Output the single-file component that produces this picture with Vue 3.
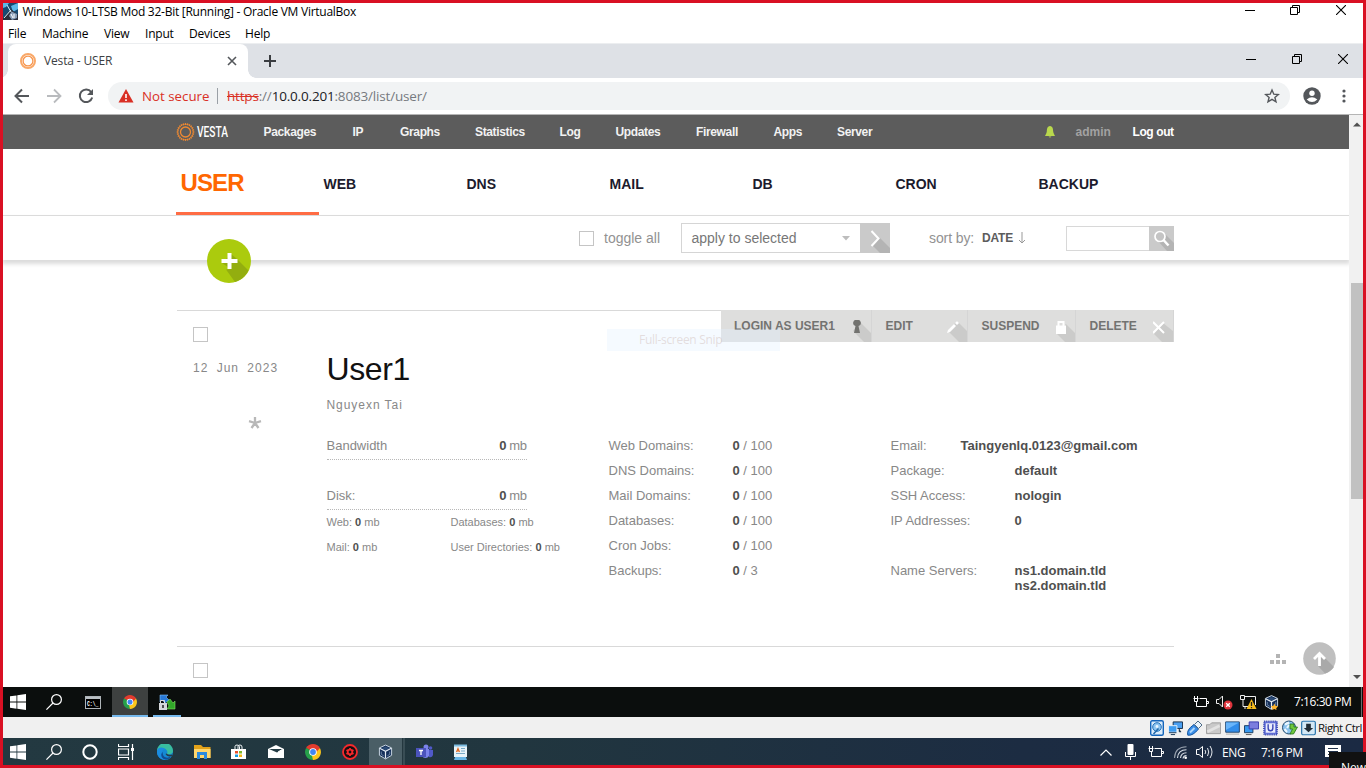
<script setup>
const menus = ['File', 'Machine', 'View', 'Input', 'Devices', 'Help']
const topLinks = ['Packages', 'IP', 'Graphs', 'Statistics', 'Log', 'Updates', 'Firewall', 'Apps', 'Server']
const sections = ['USER', 'WEB', 'DNS', 'MAIL', 'DB', 'CRON', 'BACKUP']
const quotas = [
  ['Web Domains:', '100'],
  ['DNS Domains:', '100'],
  ['Mail Domains:', '100'],
  ['Databases:', '100'],
  ['Cron Jobs:', '100'],
  ['Backups:', '3'],
]
const account = [
  ['Package:', 'default'],
  ['SSH Access:', 'nologin'],
  ['IP Addresses:', '0'],
]
const rays = Array.from({ length: 24 }, (_, i) => i * 15)
</script>

<template>
  <div class="screen">
    <svg class="defs" width="0" height="0">
      <defs>
        <symbol id="win" viewBox="0 0 16 16"><path fill="#fff" d="M0 2.3 6.5 1.4V7.6H0ZM7.3 1.3 16 0V7.6H7.3ZM0 8.5H6.5V14.7L0 13.8ZM7.3 8.5H16V16L7.3 14.8Z" /></symbol>
        <symbol id="search" viewBox="0 0 16 16"><g fill="none" stroke="#fff" stroke-width="1.2"><circle cx="10.5" cy="5.5" r="4.9" /><path d="M7 9 .4 15.600" /></g></symbol>
        <symbol id="chrome" viewBox="0 0 16 16">
          <path fill="#e33b2e" d="M8 8 1.1 4A8 8 0 0 1 14.9 4Z" /><path fill="#fbc61b" d="M8 8 14.9 4A8 8 0 0 1 8 16Z" /><path fill="#26a04a" d="M8 8V16A8 8 0 0 1 1.1 4Z" />
          <path fill="#e33b2e" d="M8 4H14.9L11.5 8Z" /><path fill="#fbc61b" d="M11.5 6 8 16 7 12Z" /><path fill="#26a04a" d="M1.1 4 4.5 10 8 8Z" />
          <circle cx="8" cy="8" r="3.8" fill="#fff" /><circle cx="8" cy="8" r="2.9" fill="#4086f4" />
        </symbol>
        <symbol id="restore" viewBox="0 0 10 10"><g fill="none" stroke="#000"><path d="M.5 2.5H7.5V9.5H.5ZM2.5 2.5V.5H9.5V7.5H7.5" /></g></symbol>
        <symbol id="close" viewBox="0 0 10 10"><path d="M0 0 10 10M10 0 0 10" stroke="#000" fill="none" stroke-width="1.1" /></symbol>
        <symbol id="battery" viewBox="0 0 16 12"><g fill="none" stroke="#fff"><path d="M6.500 2.500H13.500V10.500H3.500V7M14 5.500H15.500V7.500H14" /><path d="M1.500 0V2M4.500 0V2M.5 2.500H5.500M1.500 3V5.500H4.500V3M3.500 6V8" /></g></symbol>
        <symbol id="vbox" viewBox="0 0 16 16"><path d="M8 .6 14.500 3.600V11.500L8 15.400 1.500 11.500V3.600Z" fill="#16305a" stroke="#cfdbe6" stroke-width="1" /><path d="M4 4 8 2.200 12 4 8 6Z" fill="#2c4c77" /><path d="M1.800 4 8 7.300 14.200 4M8 7.300V15" fill="none" stroke="#e3ebf2" stroke-width="1.300" /><path d="M3.500 7.500V10.500L6 12M12.500 7.500V10.500L10 12" fill="none" stroke="#6d86a5" stroke-width="1" /></symbol>
        <symbol id="ring" viewBox="0 0 18 18">
          <g fill="none" stroke="#f9a868"><circle cx="9" cy="9" r="4.900" stroke-width="1.300" stroke="#f7934a" /><circle cx="9" cy="9" r="7" stroke-width="2" /></g>
        </symbol>
      </defs>
    </svg>

    <header class="vm-title">
      <svg class="vm-icon" width="15" height="17" viewBox="0 0 15 17"><rect width="15" height="17" fill="#174a72" /><path d="M0 0H6L3 4 0 5ZM8 3 15 0V6L10 9Z" fill="#5bb8e8" /><path d="M0 15 8 6 15 12V17H0Z" fill="#2b2f3c" /><path d="M1 15 8 7M4 2 8 9" stroke="#d6edf8" /><path d="M8.500 8.500 14 11V15L9 17 6 13Z" fill="#8ba0ba" /><path d="M8 11 10 15M11 11V15" stroke="#fff" /></svg>
      <span class="vm-name">Windows 10-LTSB Mod 32-Bit [Running] - Oracle VM VirtualBox</span>
      <div class="win-buttons vm-buttons">
        <svg width="10" height="10"><path d="M0 5.500H10" stroke="#000" /></svg>
        <svg width="10" height="10"><use href="#restore" /></svg>
        <svg width="10" height="10"><use href="#close" /></svg>
      </div>
    </header>
    <nav class="vm-menu"><span v-for="m in menus" :key="m">{{ m }}</span></nav>

    <div class="tab-strip">
      <div class="tab">
        <svg width="18" height="18" class="favicon"><use href="#ring" /></svg>
        <span class="tab-title">Vesta - USER</span>
        <svg width="10" height="10" viewBox="0 0 10 10"><path d="M1 1 9 9M9 1 1 9" stroke="#54575b" stroke-width="1.600" /></svg>
      </div>
      <svg class="new-tab" width="12" height="12"><path d="M6 0V12M0 6H12" stroke="#3a3d41" stroke-width="2" /></svg>
      <div class="win-buttons chrome-buttons">
        <svg width="10" height="10"><path d="M0 5.500H10" stroke="#000" /></svg>
        <svg width="10" height="10"><use href="#restore" /></svg>
        <svg width="10" height="10"><use href="#close" /></svg>
      </div>
    </div>
    <div class="address-row">
      <svg class="nav-icon" width="16" height="16" viewBox="0 0 16 16"><path d="M15 8H2M8 1.500 1.500 8 8 14.500" fill="none" stroke="#54575b" stroke-width="2" /></svg>
      <svg class="nav-icon" width="16" height="16" viewBox="0 0 16 16"><path d="M1 8H14M8 1.500 14.500 8 8 14.500" fill="none" stroke="#b9bbbe" stroke-width="1.800" /></svg>
      <svg class="nav-icon" width="16" height="16" viewBox="0 0 16 16"><path d="M13.200 4A6.300 6.300 0 1 0 14.200 9.500" fill="none" stroke="#54575b" stroke-width="2" /><path d="M15 1V7H9Z" fill="#54575b" /></svg>
      <div class="omnibox">
        <svg width="16" height="14" viewBox="0 0 16 14"><path d="M8 0 15.500 13.500H.5Z" fill="#d93025" /><path d="M8 5V9M8 10.200V12" stroke="#fff" stroke-width="1.600" /></svg>
        <span class="insecure">Not secure</span>
        <i class="bar"></i>
        <span class="url"><s>https</s>://<b>10.0.0.201</b>:8083/list/user/</span>
        <svg class="star" width="16" height="16" viewBox="0 0 16 16"><path d="M8 2 9.800 6.200 14.300 6.500 10.900 9.400 12 13.800 8 11.400 4 13.800 5.100 9.400 1.700 6.500 6.200 6.200Z" fill="none" stroke="#54575b" stroke-width="1.400" /></svg>
      </div>
      <svg class="avatar" width="18" height="18" viewBox="0 0 18 18"><circle cx="9" cy="9" r="8.700" fill="#54575b" /><circle cx="9" cy="6.300" r="2.700" fill="#fff" /><path d="M3.700 12.500Q9 8 14.300 12.500 9 17.500 3.700 12.500Z" fill="#fff" /></svg>
      <svg class="dots" width="4" height="14"><g fill="#54575b"><circle cx="2" cy="2" r="1.600" /><circle cx="2" cy="7" r="1.600" /><circle cx="2" cy="12" r="1.600" /></g></svg>
    </div>

    <div class="viewport">
      <div class="page">
        <div class="topbar">
          <svg class="logo" width="56" height="22">
            <g fill="none" stroke="#f08a32" transform="translate(9.500 11)"><circle r="5" stroke-width="1.300" /><circle r="7.900" stroke-width=".7" /><path v-for="a in rays" :key="a" d="M7 0H8.900" stroke-width="1.100" :transform="`rotate(${a})`" /></g>
            <text x="21" y="16" textLength="31" lengthAdjust="spacingAndGlyphs" class="logo-text">VESTA</text>
          </svg>
          <div class="top-links"><span v-for="l in topLinks" :key="l">{{ l }}</span></div>
          <svg class="bell" width="10" height="12" viewBox="0 0 10 12"><path d="M5 0C8 .5 8 3 8.200 5.500 8.400 7.500 9.500 8.500 10 10H0C.5 8.500 1.600 7.500 1.800 5.500 2 3 2 .5 5 0ZM3.500 10.500H6.500L5 11.800Z" fill="#b9d84d" /></svg>
          <span class="admin">admin</span>
          <span class="logout">Log out</span>
        </div>

        <nav class="sections"><div v-for="(s, i) in sections" :key="s" :class="['section', { active: i === 0 }]">{{ s }}</div></nav>

        <div class="toolbar">
          <i class="box"></i>
          <span class="toggle">toggle all</span>
          <div class="select"><span>apply to selected</span><svg width="8" height="5"><path d="M0 0H8L4 4.500Z" fill="#bdbdbd" /></svg></div>
          <svg width="30" height="30"><rect width="30" height="30" fill="#cacaca" /><path d="M13 23 20 15 30 25V30H20Z" fill="#b4b4b4" /><path d="M11.500 8 18.500 15.500 11.500 23" fill="none" stroke="#fff" stroke-width="2" /></svg>
          <span class="sort">sort by:</span><span class="date-sort">DATE</span>
          <svg class="down" width="8" height="12"><path d="M4 0V11M1 8 4 11 7 8" fill="none" stroke="#999" /></svg>
          <div class="search-box"></div>
          <svg width="25" height="25"><rect width="25" height="25" fill="#cacaca" /><path d="M8 14 15 7 25 17V25H18Z" fill="#b4b4b4" /><circle cx="11" cy="10.500" r="5" fill="#c4c4c4" stroke="#fff" stroke-width="1.700" /><path d="M14.500 14 19.500 19.500" stroke="#fff" stroke-width="2.500" /></svg>
        </div>

        <svg class="fab" width="44" height="44"><circle cx="22" cy="22" r="22" fill="#abcb0d" /><path d="M15 24 24 15 30 20 41.500 31.500A22 22 0 0 1 28 43L19 30.500 24 30Z" fill="#93ae0f" /><path d="M22.500 14V30M14.500 22H30.500" stroke="#fff" stroke-width="4" /></svg>

        <section class="card">
          <div class="meta">
            <i class="box"></i>
            <div class="date">12 Jun 2023</div>
            <svg class="fav" width="14" height="14"><path d="M7 7V1M7 7 1 5.200M7 7 13 5.200M7 7 3.500 12M7 7 10.500 12" stroke="#b8b8b8" stroke-width="2.300" /></svg>
          </div>
          <div class="body">
            <div class="card-head">
              <div class="who"><h1>User1</h1><p>Nguyexn Tai</p></div>
              <div class="actions">
                <div>LOGIN AS USER1<svg width="20" height="22" viewBox="0 0 20 22"><path d="M2 11 9 2 20 13V22H13L3 12Z" class="shade" /><path d="M6 0A3 3 0 0 1 7.500 6L9 13H3L4.500 6A3 3 0 0 1 6 0Z" fill="#72726f" /></svg></div>
                <div>EDIT<svg width="20" height="22" viewBox="0 0 20 22"><path d="M1 11 10 1 20 11V22H12Z" class="shade" /><path d="M0 13 1 10 7 4 9 6 3 12ZM8 3 10 1 12 3 10 5Z" fill="#fff" /></svg></div>
                <div>SUSPEND<svg width="20" height="22" viewBox="0 0 20 22"><path d="M1 13 11 4 20 13V22H10Z" class="shade" /><path d="M1 5.500H11V14H1Z" fill="#fff" /><path d="M3.500 7V2H8.500V7" fill="none" stroke="#fff" stroke-width="2" /></svg></div>
                <div>DELETE<svg width="20" height="22" viewBox="0 0 20 22"><path d="M1 14 10 3 20 11V22H9Z" class="shade" /><path d="M0 2 11 13M11 2 0 13" stroke="#fff" stroke-width="2" /></svg></div>
              </div>
            </div>
            <div class="stats">
              <div class="usage">
                <div class="meter"><span>Bandwidth</span><span class="amount"><b>0</b> mb</span></div>
                <div class="meter second"><span>Disk:</span><span class="amount"><b>0</b> mb</span></div>
                <div class="split"><span>Web: <b>0</b> mb</span><span>Databases: <b>0</b> mb</span><span>Mail: <b>0</b> mb</span><span>User Directories: <b>0</b> mb</span></div>
              </div>
              <div class="quota"><div v-for="q in quotas" :key="q[0]" class="pair"><span>{{ q[0] }}</span><span><b>0</b> / {{ q[1] }}</span></div></div>
              <div class="account">
                <div class="pair email"><span>Email:</span><b>Taingyenlq.0123@gmail.com</b></div>
                <div v-for="a in account" :key="a[0]" class="pair"><span>{{ a[0] }}</span><b>{{ a[1] }}</b></div>
                <div class="pair servers"><span>Name Servers:</span><b>ns1.domain.tld<br>ns2.domain.tld</b></div>
              </div>
            </div>
          </div>
        </section>
        <section class="card next"><div class="meta"><i class="box"></i></div></section>

        <div class="snip">Full-screen Snip</div>
        <svg class="sitemap" width="16" height="10"><path d="M6 0H10V4H6ZM0 6H4V10H0ZM6 6H10V10H6ZM12 6H16V10H12Z" fill="#b4b4b4" /></svg>
        <svg class="to-top" width="33" height="33"><circle cx="16.500" cy="16.500" r="16.300" fill="#bfbfbf" /><path d="M17 11 22 16 31 25A16 16 0 0 1 22 31.500L15 24Z" fill="#a9a9a9" /><path d="M16.500 24V12M11 17 16.500 11.500 22 17" fill="none" stroke="#fff" stroke-width="2.800" /></svg>
      </div>
      <div class="scrollbar">
        <svg width="8" height="5"><path d="M0 4.500 4 .5 8 4.500Z" fill="#505050" /></svg>
        <i class="thumb"></i>
        <svg width="8" height="5"><path d="M0 0H8L4 4Z" fill="#505050" /></svg>
      </div>
    </div>

    <div class="guest-bar">
      <div class="c30"><svg width="16" height="16"><use href="#win" /></svg></div>
      <div class="c42"><svg width="16" height="16"><use href="#search" /></svg></div>
      <div class="c36"><svg width="16" height="13"><rect x=".5" y=".5" width="15" height="12" fill="#000" stroke="#aeb4b8" /><path d="M1 2H15" stroke="#b9bfc3" stroke-width="2" /><text x="2" y="9.500" textLength="11.500" lengthAdjust="spacingAndGlyphs" class="cmd-text">C:\_</text></svg></div>
      <div class="c36 tile"><svg width="14" height="14"><use href="#chrome" /></svg></div>
      <div class="c28 under">
        <svg width="18" height="18" viewBox="0 0 18 18"><path d="M2 2H10L8 4 11 7 7 10 4 7 2 9Z" fill="#2879d8" stroke="#7cbcf5" stroke-width=".6" /><path d="M9 9 12 6 15 10 17 8V16H9L11 13Z" fill="#31a829" stroke="#83de63" stroke-width=".6" /><path d="M2.500 10V7.500H6.500V10" fill="none" stroke="#ddd" /><rect x="1" y="10" width="8" height="7" fill="#d5d7da" /><path d="M5 12V15" stroke="#222" stroke-width="1.500" /></svg>
      </div>
      <div class="tray guest-tray">
        <svg width="16" height="12"><use href="#battery" /></svg>
        <svg width="17" height="16" viewBox="0 0 17 16"><path d="M.5 5.500H3L6.500 2V13L3 9.500H.500Z" fill="none" stroke="#eee" /><circle cx="12" cy="11" r="4.500" fill="#df343c" /><path d="M10.200 9.200 13.800 12.800M13.800 9.200 10.200 12.800" stroke="#fff" stroke-width="1.300" /></svg>
        <svg width="17" height="16" viewBox="0 0 17 16"><path d="M5 2.500H15.500V11M3 6V12.500H9M5 12V15M.500 1.500H4.500V5.500H.500Z" fill="none" stroke="#eee" /><path d="M11.500 5 16.500 15H6.500Z" fill="#f7bd1b" /><path d="M11.500 8V12M11.500 13V14.200" stroke="#222" stroke-width="1.300" /></svg>
        <svg width="15" height="15" viewBox="0 0 16 16"><use href="#vbox" /><path d="M11 9 12.200 11.500 15 12 13 14 13.400 16 11 15 8.600 16 9 14 7.300 12 10 11.500Z" fill="#ffb52d" /></svg>
        <span class="clock">7:16:30 PM</span>
      </div>
    </div>

    <div class="status-bar">
      <svg width="14" height="16" viewBox="0 0 14 16" preserveAspectRatio="none"><rect x=".7" y=".7" width="12.600" height="14.600" rx="1.500" fill="#d9ebfb" stroke="#1465bb" stroke-width="1.400" /><circle cx="7" cy="7" r="4.300" fill="#8ec5f1" stroke="#2371b9" /><circle cx="7" cy="6.500" r="1.400" fill="#eef7fe" /><path d="M3.500 14 8.500 8.500" stroke="#2368a8" fill="none" stroke-width="1.600" /></svg>
      <svg width="15" height="16" viewBox="0 0 16 16"><path d="M5.500 1.500H15.500V8.500H5.500Z" fill="#499ff1" stroke="#142c47" /><path d="M.500 5.500H9.500V12.500H.500Z" fill="#3e9cf0" stroke="#e9f2fa" /><path d="M1 13H9M3 15H7.500M12 9V12H14" stroke="#123456" /></svg>
      <svg width="16" height="16" viewBox="0 0 16 16"><path d="M.800 15.200Q-1 10 7 4.500L11.500 9Q6 16 .800 15.200Z" fill="#3a8ee8" stroke="#1657a0" /><path d="M7.500 4.500 11 1 15 5 11.500 8.500Z" fill="#e9f3fb" stroke="#4d6a86" /><path d="M3 12.500 7.500 8" stroke="#abd6fb" stroke-width="2" /></svg>
      <svg width="15" height="16" viewBox="0 0 16 16"><path d="M.500 14V4.500H4L6 2.500H15.500V14Z" fill="#c9c9c9" stroke="#9d9d9d" /><path d="M1.500 12 14.500 5.500" stroke="#e2e2e2" stroke-width="3" /></svg>
      <svg width="15" height="16" viewBox="0 0 16 16"><path d="M.700 1.500H15.300V12.500H.700Z" fill="#318dea" stroke="#1f4169" /><path d="M1 2H15L1 10Z" fill="#69b5fa" /><path d="M1 14.500H15" stroke="#aaa" /></svg>
      <svg width="15" height="16" viewBox="0 0 16 16"><path d="M.500 5.500H9.500V13H.500Z" fill="#3899ef" stroke="#17395c" /><path d="M5.500 1.500H15.500V9H5.500Z" fill="#7b7dde" stroke="#373aac" /><path d="M2 15H8" stroke="#555" /></svg>
      <svg width="15" height="16" viewBox="0 0 16 16"><rect x="1" y="1" width="14" height="14" fill="#6876da" stroke="#3444b3" stroke-width="1.800" stroke-dasharray="1 1" /><rect x="3" y="3" width="10" height="10" fill="#e9ecfc" /><path d="M5.500 4V8Q5.500 11 8 11T10.500 8V4" fill="none" stroke="#3a46b4" stroke-width="1.500" /></svg>
      <svg width="16" height="16" viewBox="0 0 16 16"><circle cx="7" cy="7.500" r="6.500" fill="#8bc2ee" stroke="#244b6e" /><path d="M3 4.500 7 2.500M2.500 9 5 12M7 5 5 8" stroke="#ecf7fe" stroke-width="2" /><path d="M8 4H12V7H15.500L11.500 14H8L10.500 9H8Z" fill="#6ec73c" stroke="#25711b" stroke-width=".8" /></svg>
      <svg width="15" height="16" viewBox="0 0 16 16"><rect x=".700" y=".800" width="14.600" height="14.400" rx="1.500" fill="#d4e8f5" stroke="#2b76ae" stroke-width="1.300" /><path d="M5.500 3.500H10.500V8H13L8 12.500 3 8H5.500Z" fill="#222d36" /></svg>
      <span>Right Ctrl</span>
    </div>

    <div class="host-bar">
      <div class="c30"><svg width="16" height="16"><use href="#win" /></svg></div>
      <div class="c42"><svg width="16" height="16"><use href="#search" /></svg></div>
      <div class="c30"><svg width="16" height="16"><circle cx="8" cy="8" r="6.700" fill="none" stroke="#fff" stroke-width="2" /></svg></div>
      <div class="c42"><svg width="16" height="16"><g fill="none" stroke="#fff"><path d="M.500 0V2.500H10.500V0M.500 16V13.500H10.500V16M.500 5H10.500V11H.500ZM14.500 0V16" stroke-width="1.200" /><path d="M14.500 4V7" stroke-width="3" /></g></svg></div>
      <div class="c36"><svg width="16" height="16" viewBox="0 0 16 16"><circle cx="8" cy="8" r="8" fill="#1589d4" /><path d="M0 7A8 8 0 0 1 16 7C16 10.500 11 11 10 9.500 11 8 10 5 7 4.500 4 4 1 5.500 0 7Z" fill="#38bda0" /><path d="M0 7C1 2 7 3 8.500 5.500 5 5 3 9 6 13 7 15 9 16 9 16 3 16-.5 12 0 7Z" fill="#1a8ce0" /><path d="M6 8C4.500 12 9 15.500 14 12.500 12 16 7 16.500 5 13.500 3.500 11 4.500 9 6 8Z" fill="#114c93" /><path d="M9.500 9.500Q11.500 11.500 15 10.500V12Q10 13.500 8.500 10Z" fill="#263d48" /></svg></div>
      <div class="c38"><svg width="17" height="16"><path d="M0 1H7L9 3H16.500V14H0Z" fill="#e3a21a" /><path d="M0 5H16.500V14H0Z" fill="#ffd66d" /><path d="M3 8H13V15H10V11H6V15H3Z" fill="#2a8adf" /></svg></div>
      <div class="c34"><svg width="15" height="16"><path d="M0 5H15V15H0Z" fill="#fff" /><path d="M4 5V2.500Q4 1 6 1T8.500 3V5M7 5V2.500Q7 1 9 1T11 3V5" fill="none" stroke="#eef3f5" /><path d="M4 7H7V9.500H4Z" fill="#e9512a" /><path d="M8 7H11V9.500H8Z" fill="#80b929" /><path d="M4 10.500H7V13H4Z" fill="#129de1" /><path d="M8 10.500H11V13H8Z" fill="#f6b516" /></svg></div>
      <div class="c42"><svg width="16" height="16"><path d="M0 5 8 1 16 5V14H0Z" fill="#fff" /><path d="M1 5H15L9 8.500Z" fill="#243c45" /><path d="M10 8 15 5" stroke="#fff" /></svg></div>
      <div class="c32"><svg width="16" height="16"><use href="#chrome" /></svg></div>
      <div class="c42 gear"><svg width="16" height="16"><circle cx="8" cy="8" r="7" fill="#160f12" stroke="#f5292c" stroke-width="1.800" /><circle cx="8" cy="8" r="2.300" fill="none" stroke="#f5292c" stroke-width="1.800" /><path d="M8 4V6M8 10V12M4.500 6 6 7M10 9 11.500 10M4.500 10 6 9M10 7 11.500 6" stroke="#f5292c" stroke-width="1.800" /></svg></div>
      <div class="vb-tile"><svg width="15" height="16"><use href="#vbox" /></svg></div>
      <i class="stack-edge"></i>
      <div class="c38"><svg width="17" height="16"><circle cx="10" cy="3" r="2.500" fill="#7b83eb" /><circle cx="14.500" cy="4" r="1.800" fill="#5059c9" /><path d="M6 5H13V12A4 4 0 0 1 6 12Z" fill="#7b83eb" /><path d="M13 6H17V11Q16 14 13 13Z" fill="#5059c9" /><rect y="4" width="10" height="9" fill="#4b53bc" /><path d="M3 6.500H7M5 6.500V11" stroke="#fff" stroke-width="1.300" /></svg></div>
      <div class="c36 pad"><svg width="13" height="16"><path d="M0 1H13V13H0Z" fill="#eaf4f9" /><path d="M0 1.500H13" stroke="#7dbce0" stroke-width="2" /><path d="M1 13H12L13 16H0Z" fill="#69b6e6" /><path d="M7 4.500H11M7 7H11M2 9.500H11" stroke="#78abc8" /><path d="M2.500 8 4 4.500 5.500 8M3 7H5" stroke="#e4671d" fill="none" stroke-width="1.100" /></svg></div>
      <div class="tray host-tray">
        <svg width="12" height="7"><path d="M.500 6.500 6 1 11.500 6.500" fill="none" stroke="#fff" stroke-width="1.200" /></svg>
        <svg width="11" height="16"><rect x="2.500" width="6" height="11" rx="1" fill="#fff" /><path d="M.500 8V12.500H10.500V8M5.500 12.500V16" fill="none" stroke="#fff" /></svg>
        <svg width="16" height="12"><use href="#battery" /></svg>
        <svg width="13" height="13"><g fill="none" stroke="#d9dfe7" stroke-width="1.100"><path d="M.500 12Q1 1 12.500.800" opacity=".65" /><path d="M3.500 12Q4 4 12.500 3.800M6.500 12Q7 7 12.500 6.800M9 12.500Q9.500 9.500 12.500 9.500" /></g><circle cx="11.700" cy="11.700" r="1.300" fill="#fff" /></svg>
        <svg width="17" height="14"><path d="M.500 4.500H3L6.500 1.500V12.500L3 9.500H.500Z" fill="none" stroke="#fff" /><path d="M9 5Q10.500 7 9 9M11.500 3Q14 7 11.500 11M14 1Q18 7 14 13" fill="none" stroke="#e4e8ed" /></svg>
        <span class="lang">ENG</span><span class="time">7:16 PM</span>
        <svg width="16" height="14"><path d="M0 0H16V12H9L6 14V12H0Z" fill="#fff" /><path d="M3 3.500H13M3 6.500H13M3 9.500H8" stroke="#203048" /></svg>
      </div>
    </div>
  </div>
  <div class="toast">New</div>
</template>

<style>
body { background: #fff; overflow: hidden; }
</style>

<style scoped>
.screen { position: relative; box-sizing: border-box; width: 1366px; height: 768px; border: 3px solid #d91023; background: #fff; overflow: hidden; display: flex; flex-direction: column; font-family: "Liberation Sans", Arial, sans-serif; white-space: nowrap; }
.screen > * { flex: none; }
.defs { position: absolute; }
svg { display: block; flex: none; }
i { display: block; flex: none; }

.vm-title { height: 20px; display: flex; align-items: center; font: 12px "Open Sans", sans-serif; color: #000; }
.vm-icon { margin-top: -3px; }
.vm-name { margin: -3px 0 0 4.500px; letter-spacing: -0.260px; }
.win-buttons { margin: -6px 17px 0 auto; display: flex; gap: 36px; }
.vm-buttons svg:first-child { margin-right: -1px; }
.vm-menu { height: 21px; padding-left: 5px; box-sizing: border-box; display: grid; grid-template-columns: 34px 62px 41px 44px 56px 40px; align-items: center; font: 12px "Open Sans", sans-serif; letter-spacing: -0.200px; border-bottom: 1px solid #eceef0; }

.tab-strip { height: 34px; background: #dee1e6; display: flex; align-items: center; }
.tab { width: 240px; height: 34px; margin-left: 5px; padding: 0 11px; box-sizing: border-box; background: #fff; border-radius: 8px 8px 0 0; display: flex; align-items: center; position: relative; }
.tab::before, .tab::after { content: ""; position: absolute; bottom: 0; width: 8px; height: 8px; }
.tab::before { left: -8px; background: radial-gradient(circle at 0 0, #dee1e6 7.500px, #fff 8px); }
.tab::after { right: -8px; background: radial-gradient(circle at 100% 0, #dee1e6 7.500px, #fff 8px); }
.favicon { margin-right: 7px; }
.tab-title { flex: 1; margin-top: -1px; font: 12px "Open Sans", sans-serif; color: #3c4043; letter-spacing: -0.150px; }
.new-tab { margin-left: 16px; }
.chrome-buttons { margin: -5px 15px 0 auto; }
.address-row { height: 36px; display: flex; align-items: center; padding-left: 11px; border-bottom: 1px solid #b5b5b5; }
.nav-icon { margin-right: 16px; }
.omnibox { width: 1182px; height: 28px; margin-left: -2px; border-radius: 14px; background: #f1f3f4; display: flex; align-items: center; padding: 0 10px; box-sizing: border-box; font: 14px "Open Sans", sans-serif; }
.insecure { width: 68px; margin-left: 8px; color: #d93025; font-size: 13.300px; }
.bar { width: 1px; height: 16px; margin: 0 9px 0 7px; background: #9aa0a6; }
.url { color: #767a7f; font-size: 13.500px; letter-spacing: -0.180px; }
.url s { color: #d93025; }
.url b { color: #202124; font-weight: 400; }
.star { margin-left: auto; }
.avatar { margin-left: 13px; }
.dots { margin-left: 21px; }

.viewport { height: 572px; display: flex; }
.page { width: 1346px; height: 572px; position: relative; overflow: hidden; }
.scrollbar { width: 14px; box-sizing: border-box; background: #f1f1f1; display: flex; flex-direction: column; align-items: flex-end; padding: 7px 2px 7px 0; }
.thumb { width: 12px; height: 216px; margin: 156px -2px auto 0; background: #c1c1c1; }

.topbar { height: 34px; box-sizing: border-box; padding-left: 173px; background: #5c5c5c; display: flex; align-items: center; font-size: 12px; font-weight: 700; color: #f2f2f2; }
.logo-text { font: 500 14.500px Roboto, sans-serif; fill: #fff; }
.top-links { width: 781px; margin-left: 31.500px; display: grid; grid-template-columns: 89px 47.500px 75px 84.500px 56px 80.500px 77.500px 63.500px 40px; letter-spacing: -0.350px; }
.bell { margin-right: 21px; }
.admin { width: 57px; color: #a2a2a2; }
.logout { color: #fff; letter-spacing: -0.400px; }

.sections { height: 67px; padding-left: 173px; box-sizing: border-box; border-bottom: 1px solid #dbdbdb; display: grid; grid-template-columns: repeat(7, 143px); }
.section { padding: 1px 0 0 4.500px; line-height: 68px; height: 66px; box-sizing: border-box; font-size: 14px; font-weight: 700; color: #1c1b2d; }
.section.active { font-size: 24px; line-height: 66px; letter-spacing: -0.900px; color: #ff6701; border-bottom: 3px solid #ff6c44; }
.toolbar { height: 44px; padding-left: 576px; box-sizing: border-box; display: flex; align-items: center; font-size: 14px; color: #929292; box-shadow: 0 3px 4px 1px #dcdcdc; }
.box { width: 15px; height: 15px; border: 1px solid #c5c5c5; box-sizing: border-box; background: #fff; }
.toggle { width: 67px; margin-left: 10px; }
.select { margin-left: 10px; width: 179px; height: 30px; padding: 0 10px 0 9.500px; box-sizing: border-box; border: 1px solid #d5d5d5; border-right: 0; display: flex; align-items: center; justify-content: space-between; color: #777; }
.sort { margin-left: 39px; width: 53px; letter-spacing: -0.100px; }
.date-sort { font-size: 12px; font-weight: 700; width: 36px; color: #5c5c5c; letter-spacing: -0.200px; }
.search-box { width: 83px; height: 25px; box-sizing: border-box; border: 1px solid #d8d8d8; border-right: 0; margin-left: 40px; }
.fab { position: absolute; left: 203.500px; top: 123.500px; }

.card { width: 997px; height: 336px; margin: 50px 0 0 174px; box-sizing: border-box; border-top: 1px solid #d9d9d9; display: grid; grid-template-columns: 149.500px 847.500px; color: #888; font-size: 13px; }
.card.next { margin-top: 0; height: 60px; }
.meta { padding: 16px 0 0 16px; }
.date { margin-top: 18px; line-height: 16px; font-size: 12px; letter-spacing: 1px; word-spacing: 4px; }
.fav { margin: 40px 0 0 55px; }
.card-head { height: 122px; display: flex; justify-content: space-between; align-items: flex-start; }
.who { padding-top: 38px; }
h1 { margin: 0; font-size: 32px; line-height: 40px; font-weight: 400; letter-spacing: -0.400px; color: #111; }
.who p { margin: 8px 0 0; font-size: 12px; line-height: 16px; letter-spacing: 0.950px; }
.actions { width: 453px; height: 32px; margin-top: -1px; background: #dededd; display: grid; grid-template-columns: 151px 96px 108px 98px; font-size: 12px; font-weight: 700; color: #737371; }
.actions > div { padding-left: 13.500px; border-right: 1px solid #d5d5d5; display: flex; justify-content: space-between; line-height: 32px; box-sizing: border-box; overflow: hidden; }
.actions > div:first-child { padding-left: 13px; }
.actions svg { margin-top: 10px; }
.shade { fill: #cbcbca; }
.stats { display: grid; grid-template-columns: 282px 282px 283px; line-height: 25px; }
b { color: #4f4f4f; }
.meter { width: 200px; height: 26px; display: flex; justify-content: space-between; border-bottom: 1px dotted #b8b8b8; }
.meter.second { margin-top: 23px; }
.amount { letter-spacing: -0.400px; }
.split { display: grid; grid-template-columns: 124px 124px; font-size: 11px; }
.pair { display: grid; grid-template-columns: 124px 1fr; }
.email { grid-template-columns: 70px 1fr; }
.servers { margin-top: 25px; }
.servers b { line-height: 15px; padding-top: 5px; }
.snip { position: absolute; left: 604px; top: 214px; width: 173px; height: 22px; padding-left: 32px; box-sizing: border-box; background: rgba(225, 242, 255, 0.35); color: rgba(205, 185, 180, 0.45); font: 12px/22px "Open Sans", sans-serif; letter-spacing: -0.300px; }
.sitemap { position: absolute; left: 1267px; top: 539px; }
.to-top { position: absolute; left: 1300px; top: 527px; }

.guest-bar { height: 30px; background: #0b0e0d; display: flex; }
.guest-bar > div, .host-bar > div { display: flex; align-items: center; justify-content: center; }
.c28 { width: 28px; } .c30 { width: 30px; } .c32 { width: 32px; } .c34 { width: 34px; } .c36 { width: 36px; } .c38 { width: 38px; } .c42 { width: 42px; }
.cmd-text { font: 700 7px "Liberation Mono", monospace; fill: #fff; }
.tile { margin-left: 1px; background: #3e4140; box-shadow: inset 0 -2px #76b9ed; }
.under { margin-left: 5px; box-shadow: inset 0 -2px #76b9ed; }
.tray { margin-left: auto; color: #fff; font: 12px "Open Sans", sans-serif; }
.guest-tray { gap: 7px; border-right: 1px solid #686b6d; margin-right: 1px; }
.clock { width: 58px; margin: -1px 9px 0 8px; letter-spacing: -0.450px; }
.status-bar { height: 21px; background: #f0f0f0; display: flex; align-items: center; gap: 4px; padding-left: 1147px; font: 11.500px "Open Sans", sans-serif; color: #111; box-sizing: border-box; }
.status-bar svg:nth-child(3), .status-bar svg:nth-child(8) { margin-right: -1px; }
.status-bar span { margin-left: -2px; letter-spacing: -0.550px; }
.host-bar { height: 27px; background: linear-gradient(90deg, #233941, #21363f 38%, #1c2c42 75%, #1b2a43); display: flex; padding-top: 1px; box-sizing: border-box; }
.gear { width: 40px; box-sizing: border-box; margin-right: -3px; margin-left: 1px; }
.vb-tile { width: 33px; margin: -1px 0 0 2px; padding-top: 1px; background: #4a5e66; }
.stack-edge { width: 3px; margin-top: -1px; background: #394d55; border-left: 1px solid #24373f; box-sizing: border-box; }
.pad { margin-left: -1px; }
.host-tray { padding-right: 22px; }
.host-tray svg:nth-child(2) { margin-left: 13px; }
.host-tray svg:nth-child(3) { margin-left: 12px; }
.host-tray svg:nth-child(4) { margin-left: 10px; }
.host-tray svg:nth-child(5) { margin-left: 9px; }
.lang { width: 24px; margin-left: 9px; letter-spacing: -0.300px; }
.time { width: 43px; margin: 0 21px 0 15px; letter-spacing: -0.450px; }
.toast { position: absolute; left: 1329px; top: 752px; width: 37px; height: 16px; padding: 8px 0 0 12px; box-sizing: border-box; overflow: hidden; background: #111; color: #fff; font: 12px/16px "Open Sans", sans-serif; }
</style>
